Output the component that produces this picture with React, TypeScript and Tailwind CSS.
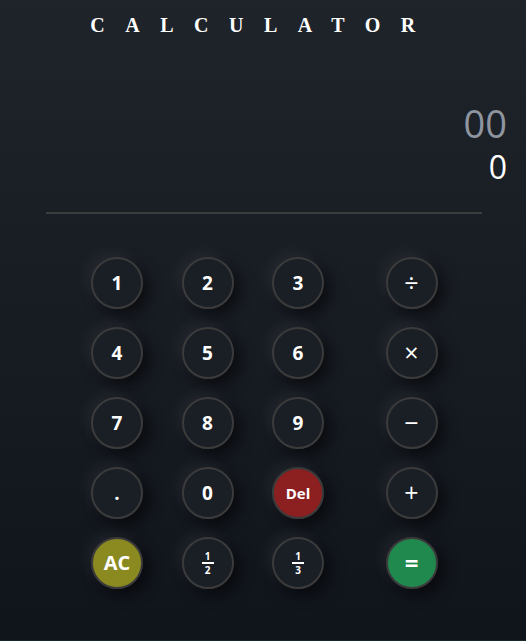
import React from "react";

type Btn = { label: React.ReactNode; kind?: "num" | "op" | "ac" | "del" | "eq" | "frac" };

function Frac({ d }: { d: string }) {
  return (
    <div className="flex flex-col items-center leading-none">
      <span className="text-[10px] font-bold leading-[10px]">1</span>
      <span className="w-[12px] h-[1.5px] bg-white my-[1px]" />
      <span className="text-[10px] font-bold leading-[10px]">{d}</span>
    </div>
  );
}

const rows: Btn[][] = [
  [{ label: "1" }, { label: "2" }, { label: "3" }, { label: "÷", kind: "op" }],
  [{ label: "4" }, { label: "5" }, { label: "6" }, { label: "×", kind: "op" }],
  [{ label: "7" }, { label: "8" }, { label: "9" }, { label: "−", kind: "op" }],
  [{ label: "." }, { label: "0" }, { label: "Del", kind: "del" }, { label: "+", kind: "op" }],
  [
    { label: "AC", kind: "ac" },
    { label: <Frac d="2" />, kind: "frac" },
    { label: <Frac d="3" />, kind: "frac" },
    { label: "=", kind: "eq" },
  ],
];

function Button({ b, last }: { b: Btn; last: boolean }) {
  const kind = b.kind ?? "num";
  let bg = "bg-[#1a1e25]";
  let text = "text-[19px] font-bold";
  if (kind === "op") text = "text-[25px] font-normal";
  if (kind === "frac") text = "text-[10px] font-bold";
  if (kind === "ac") {
    bg = "bg-[#8b8a20]";
    text = "text-[20px] font-bold";
  }
  if (kind === "del") {
    bg = "bg-[#8c2020]";
    text = "text-[15px] font-bold";
  }
  if (kind === "eq") {
    bg = "bg-[#208a4e]";
    text = "text-[24px] font-bold";
  }
  return (
    <div
      className={`${last ? "justify-self-end" : ""} w-[52px] h-[52px] rounded-full border-2 border-[#3b3b3c] ${bg} ${text} text-white flex items-center justify-center shadow-[-5px_-5px_14px_rgba(255,255,255,0.06),6px_6px_14px_rgba(0,0,0,0.55)]`}
      style={{ fontFamily: '"Open Sans", "DejaVu Sans", sans-serif' }}
    >
      {b.label}
    </div>
  );
}

export default function App() {
  return (
    <div className="w-[526px] h-[641px] flex flex-col bg-[#17282c]">
      <div className="w-[526px] h-[640px] bg-gradient-to-b from-[#1f232a] to-[#10141b] flex flex-col">
        <div
          className="pt-[15px] text-center text-white font-bold text-[20px] leading-none tracking-[20.5px]"
          style={{ fontFamily: '"Liberation Serif", serif' }}
        >
          CALCULATOR
        </div>
        <div
          className="mt-[69px] pr-[19px] flex flex-col items-end"
          style={{ fontFamily: '"Open Sans", sans-serif' }}
        >
          <div className="text-[38px] leading-none text-[#8e959e]">00</div>
          <div className="mt-[9px] text-[32px] leading-none text-white">0</div>
        </div>
        <div className="mt-[29px] ml-[46px] w-[436px] h-[2px] bg-[#3a3c3e]" />
        <div className="mt-[43px] ml-[91px] grid grid-cols-[52px_52px_52px_75px] gap-x-[38.5px] gap-y-[18px]">
          {rows.map((r, i) =>
            r.map((b, j) => <Button key={`${i}-${j}`} b={b} last={j === 3} />)
          )}
        </div>
      </div>
    </div>
  );
}
